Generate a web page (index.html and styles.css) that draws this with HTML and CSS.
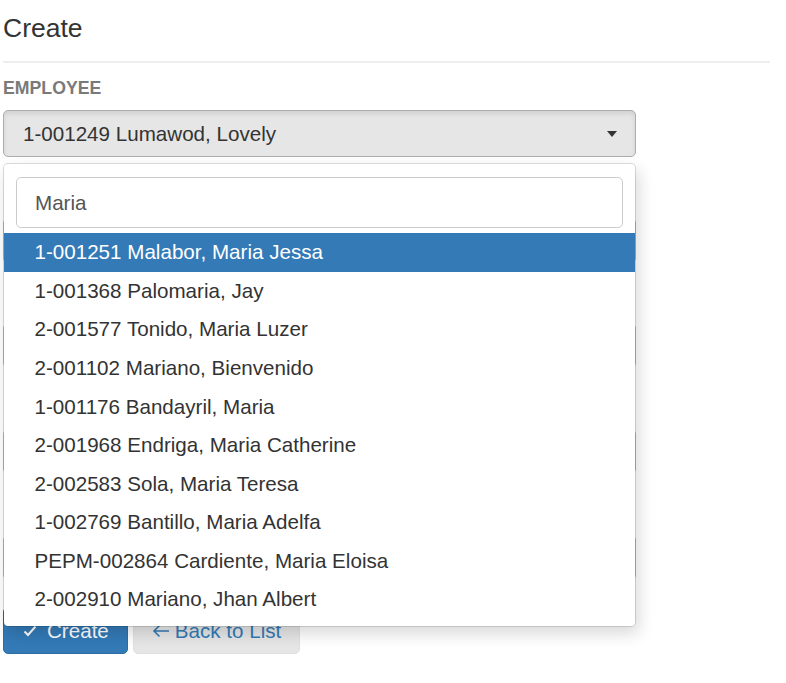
FILE: index.html
```html
<!DOCTYPE html>
<html lang="en">
<head>
<meta charset="utf-8">
<title>Create</title>
<link rel="stylesheet" href="styles.css">
</head>
<body>
<div class="page">
  <h3 class="title">Create</h3>
  <hr class="rule">
  <form class="form">
    <div class="group">
      <label class="label">EMPLOYEE</label>
      <div class="select2">
        <div class="selection">
          <span class="sel-text">1-001249 Lumawod, Lovely</span>
          <span class="arrow"></span>
        </div>
        <div class="dropdown">
          <div class="search-wrap">
            <div class="search">Maria</div>
          </div>
          <ul class="results">
            <li class="option active">1-001251 Malabor, Maria Jessa</li>
            <li class="option">1-001368 Palomaria, Jay</li>
            <li class="option">2-001577 Tonido, Maria Luzer</li>
            <li class="option">2-001102 Mariano, Bienvenido</li>
            <li class="option">1-001176 Bandayril, Maria</li>
            <li class="option">2-001968 Endriga, Maria Catherine</li>
            <li class="option">2-002583 Sola, Maria Teresa</li>
            <li class="option">1-002769 Bantillo, Maria Adelfa</li>
            <li class="option">PEPM-002864 Cardiente, Maria Eloisa</li>
            <li class="option">2-002910 Mariano, Jhan Albert</li>
          </ul>
        </div>
      </div>
    </div>
    <div class="group"><div class="label-space"></div><div class="control"></div></div>
    <div class="group"><div class="label-space"></div><div class="control"></div></div>
    <div class="group"><div class="label-space"></div><div class="control"></div></div>
    <div class="group"><div class="label-space"></div><div class="control"></div></div>
    <div class="actions">
      <button type="button" class="btn btn-primary">
        <svg class="icon" width="14" height="12" viewBox="0 0 14 12"><polyline points="1.5,6.5 5,10 12.5,1.5" fill="none" stroke="#ffffff" stroke-width="2"/></svg>
        <span>Create</span>
      </button>
      <button type="button" class="btn btn-default">
        <svg class="icon" width="18" height="14" viewBox="0 0 18 14"><path d="M17 7H2M7.5 1.5L2 7l5.5 5.5" fill="none" stroke="#337ab7" stroke-width="1.6"/></svg>
        <span>Back to List</span>
      </button>
    </div>
  </form>
</div>
</body>
</html>
```

FILE: styles.css
```css
* { box-sizing: border-box; }

html, body {
  margin: 0;
  padding: 0;
  background: #ffffff;
}

body {
  font-family: "Liberation Sans", Arial, sans-serif;
  color: #333333;
}

.page {
  margin-left: 3px;
  width: 767px;
}

.title {
  margin: 14px 0 18px 0;
  font-size: 26.5px;
  line-height: 1.1;
  font-weight: 400;
  color: #333333;
}

.rule {
  margin: 0;
  border: 0;
  height: 2px;
  background: #eeeeee;
}

.form {
  width: 633px;
  margin-top: 13px;
  display: flex;
  flex-direction: column;
}

.group {
  margin-bottom: 26.6px;
}

.label {
  display: block;
  font-size: 17.7px;
  line-height: 24px;
  font-weight: 700;
  color: #7a7a7a;
  margin-bottom: 10px;
}

.label-space {
  height: 24px;
  margin-bottom: 10px;
}

.control {
  height: 45px;
  border: 1px solid #c4c4c4;
  border-radius: 5px;
  background: #ffffff;
}

.select2 {
  position: relative;
}

.selection {
  height: 47px;
  border: 1px solid #adadad;
  border-radius: 5px;
  background: #e6e6e6;
  box-shadow: inset 0 3px 5px rgba(0, 0, 0, 0.09);
  display: flex;
  align-items: center;
  justify-content: space-between;
  padding: 0 18px 0 19px;
}

.sel-text {
  font-size: 20.6px;
  line-height: 24px;
  color: #333333;
}

.arrow {
  width: 0;
  height: 0;
  border-left: 5px solid transparent;
  border-right: 5px solid transparent;
  border-top: 6px solid #333333;
  margin-top: 1px;
}

.dropdown {
  position: absolute;
  left: 0;
  right: 0;
  top: calc(100% + 6px);
  z-index: 10;
  background: #ffffff;
  background-clip: padding-box;
  border: 1px solid rgba(0, 0, 0, 0.13);
  border-radius: 5px;
  box-shadow: 3px 7px 16px rgba(0, 0, 0, 0.15);
  padding-bottom: 7px;
}

.search-wrap {
  padding: 13px 12px 5px 12px;
}

.search {
  height: 51px;
  border: 1px solid #cccccc;
  border-radius: 5px;
  padding: 0 18px;
  display: flex;
  align-items: center;
  font-size: 20.6px;
  color: #555555;
  background: #ffffff;
}

.results {
  list-style: none;
  margin: 0;
  padding: 0;
}

.option {
  padding: 7px 30.5px;
  font-size: 20.6px;
  line-height: 24.6px;
  color: #333333;
  white-space: nowrap;
}

.option.active {
  background: #337ab7;
  color: #ffffff;
}

.actions {
  display: flex;
  gap: 5px;
  margin-top: 1px;
}

.btn {
  height: 47px;
  border-radius: 5px;
  display: flex;
  align-items: center;
  font-family: "Liberation Sans", Arial, sans-serif;
  font-size: 20.6px;
  padding: 0 18px;
  cursor: pointer;
}

.btn-primary {
  background: #337ab7;
  border: 1px solid #2e6da4;
  color: #ffffff;
  gap: 10px;
  padding-left: 19px;
}

.btn-default {
  background: #e6e6e6;
  border: 1px solid #e0e0e0;
  color: #337ab7;
  gap: 5px;
}

.icon {
  display: block;
  flex: none;
}
```
